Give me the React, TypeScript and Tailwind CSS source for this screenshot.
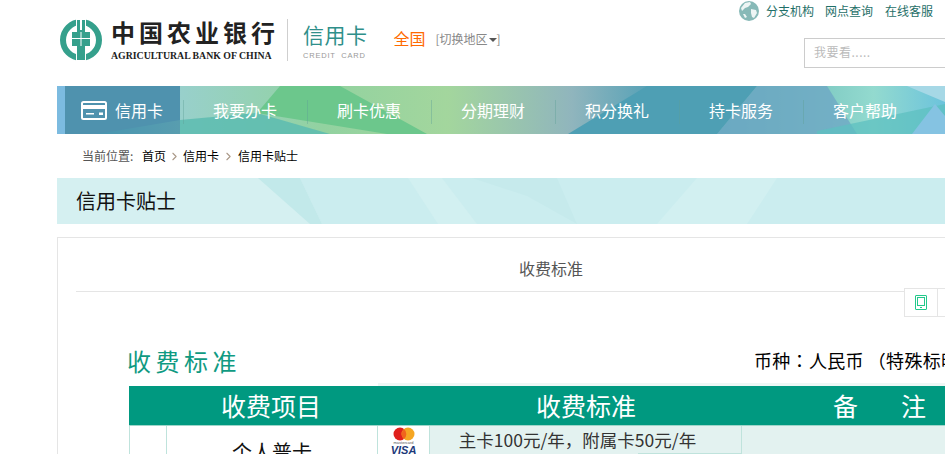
import { ChevronRight } from "lucide-react";

const cjk = "font-['Microsoft_YaHei','Noto_Sans_CJK_SC',sans-serif]";

const navItems = ["我要办卡", "刷卡优惠", "分期理财", "积分换礼", "持卡服务", "客户帮助"];

const AbcLogo = () => (
  <svg width="44" height="42" viewBox="0 0 44 42" className="shrink-0">
    <circle cx="22" cy="21" r="18" fill="none" stroke="#35a08c" strokeWidth="6" />
    <rect x="17" y="0" width="10" height="42" fill="#fff" />
    <path d="M18 1h3v10h2V1h3v12h5v14h-5v14h-8V27h-5V13h5z" fill="#35a08c" />
    <path d="M13 19.500h18M22 13v14" stroke="#fff" strokeWidth="1" />
  </svg>
);

const Globe = () => (
  <svg width="20" height="20" viewBox="0 0 20 20">
    <circle cx="10" cy="10" r="10" fill="#87b9b7" />
    <path d="M6 2l5-1 1 2-3 3-3 1-3 3-1-3zM12 8l5 1 1 3-3 5-2-1-1-4zM4 13l2 0 2 3-2 1z" fill="#fff" opacity=".85" />
  </svg>
);

const CardIcon = () => (
  <svg width="26" height="19" viewBox="0 0 26 19" fill="none">
    <rect x="1" y="1" width="24" height="17" rx="1.500" stroke="#fff" strokeWidth="2" />
    <rect x="1" y="4" width="24" height="4" fill="#fff" />
    <rect x="5" y="12" width="8" height="1.500" fill="#fff" />
    <rect x="18" y="11.500" width="4" height="2.500" fill="#fff" />
  </svg>
);

const NavBackground = () => (
  <svg className="absolute inset-0" width="888" height="48" viewBox="0 0 888 48" preserveAspectRatio="none">
    <defs>
      <linearGradient id="navBase" x1="0" x2="1" y1="0" y2="0">
        <stop offset="0" stopColor="#5cb4cf" />
        <stop offset="0.14" stopColor="#98d0cb" />
        <stop offset="0.3" stopColor="#92d2a0" />
        <stop offset="0.44" stopColor="#a3d69d" />
        <stop offset="0.58" stopColor="#90b5bd" />
        <stop offset="0.68" stopColor="#4f9fb6" />
        <stop offset="0.8" stopColor="#6dbcb8" />
        <stop offset="0.92" stopColor="#93dacf" />
        <stop offset="1" stopColor="#6cc3dc" />
      </linearGradient>
    </defs>
    <rect width="888" height="48" fill="url(#navBase)" />
    <polygon points="0,0 8,0 8,48 0,48" fill="#7cbbe0" />
    <polygon points="8,0 123,0 123,34 40,48 8,48" fill="#7fb3c8" />
    <polygon points="123,34 200,27 273,48 123,48" fill="#5cbcb0" opacity=".85" />
    <polygon points="223,0 283,0 370,48 330,48 200,27" fill="#6cc78c" />
    <polygon points="590,0 700,0 660,48 511,48" fill="#4e9fb4" />
    <polygon points="700,0 770,0 800,48 660,48" fill="#6ea8c4" opacity=".8" />
    <polygon points="760,45 888,18 888,48 760,48" fill="#5dc0c0" opacity=".75" />
    <polygon points="855,48 878,18 888,30 888,48" fill="#85c3e2" />
    <polygon points="850,0 888,0 888,16" fill="#a6d8e6" />
  </svg>
);

const BandBackground = () => (
  <svg className="absolute inset-0" width="888" height="46" viewBox="0 0 888 46">
    <rect width="888" height="46" fill="#d5f0f1" />
    <polygon points="243,0 888,0 888,46 265,46" fill="#cbedef" />
    <polygon points="201,0 243,0 265,46 253,46" fill="#c2e9ea" />
    <polygon points="351,0 385,0 420,46 381,46" fill="#d2f0f1" />
    <polygon points="415,0 500,0 520,46 470,18" fill="#c6eaec" />
    <polygon points="640,0 720,0 690,46 600,46" fill="#d2f0f1" />
  </svg>
);

const CardBrands = () => (
  <div className="flex flex-col items-center pt-[1px]">
    <svg width="22" height="14" viewBox="0 0 22 14">
      <circle cx="7" cy="7" r="6.500" fill="#e0201c" />
      <circle cx="15" cy="7" r="6.500" fill="#f5a623" />
      <path d="M11 2a6.500 6.500 0 0 1 0 10a6.500 6.500 0 0 1 0-10z" fill="#f0641e" />
    </svg>
    <span className="font-['Liberation_Sans',sans-serif] text-[4px] leading-[4px] text-[#555]">mastercard</span>
    <span className="font-['Liberation_Sans',sans-serif] text-[11px] leading-[11px] font-bold italic text-[#1d3a7a]">VISA</span>
  </div>
);

export default function App() {
  return (
    <div className={`h-[454px] w-[945px] overflow-hidden bg-white ${cjk}`}>
      <header className="flex h-[86px] pl-[59px]">
        <div className="flex h-full items-start pt-[19px]">
          <AbcLogo />
          <div className="ml-[8px] flex w-[165px] flex-col">
            <span className="-mt-[2px] font-['Noto_Sans_CJK_SC',sans-serif] text-[24px] leading-[30px] font-bold tracking-[4px] whitespace-nowrap text-[#222]">
              中国农业银行
            </span>
            <span className="mt-[3px] font-['Liberation_Serif',serif] text-[9.800px] leading-[12px] font-bold whitespace-nowrap text-[#222]">
              AGRICULTURAL BANK OF CHINA
            </span>
          </div>
          <div className="ml-[11px] h-[42px] w-px bg-[#cfcfcf]" />
          <div className="ml-[15px] flex flex-col">
            <span className="text-[21px] leading-[30px] tracking-[0.500px] whitespace-nowrap text-[#2f8f8a]">信用卡</span>
            <span className="mt-[2px] font-['Liberation_Sans',sans-serif] text-[7.500px] leading-[10px] tracking-[0.800px] whitespace-pre text-[#999]">
              CREDIT  CARD
            </span>
          </div>
          <span className="mt-[9px] ml-[26px] text-[16px] leading-[20px] whitespace-nowrap text-[#ff6a00]">全国</span>
          <span className="mt-[11px] ml-[10px] flex items-center text-[12px] leading-[18px] whitespace-nowrap text-[#888]">
            [切换地区
            <span className="mt-[2px] ml-[1px] h-0 w-0 border-x-[4px] border-t-[4px] border-x-transparent border-t-[#555]" />
            ]
          </span>
        </div>
        <div className="ml-auto flex w-[206px] shrink-0 flex-col">
          <div className="flex items-center pt-px">
            <Globe />
            <a className="ml-[7px] text-[12px] leading-[20px] whitespace-nowrap text-[#1f6f68]">分支机构</a>
            <a className="ml-[11px] text-[12px] leading-[20px] whitespace-nowrap text-[#1f6f68]">网点查询</a>
            <a className="ml-[12px] text-[12px] leading-[20px] whitespace-nowrap text-[#1f6f68]">在线客服</a>
          </div>
          <div className="mt-[17px] ml-[65px] flex h-[30px] w-[160px] shrink-0 items-center border border-[#ccc] pb-[2px] pl-[9px] text-[12px] tracking-[0.500px] whitespace-nowrap text-[#bbb]">
            我要看.....
          </div>
        </div>
      </header>

      <div className="ml-[57px] w-[888px]">
        <nav className="relative flex h-[48px] overflow-hidden">
          <NavBackground />
          <div className="relative mr-[3px] ml-[8px] flex h-full w-[115px] shrink-0 items-center bg-[#2f7c9c]/60 pl-[16px]">
            <CardIcon />
            <span className="ml-[8px] pb-px text-[16px] whitespace-nowrap text-white">信用卡</span>
          </div>
          {navItems.map((item) => (
            <div key={item} className="relative flex h-full w-[124px] shrink-0 items-center justify-center">
              <span className="absolute top-[14px] left-0 h-[24px] w-px bg-[#5f9f96]/40" />
              <span className="pb-px text-[16px] whitespace-nowrap text-white">{item}</span>
            </div>
          ))}
        </nav>

        <div className="flex h-[44px] items-center pl-[25px] text-[12px] whitespace-nowrap text-black">
          <span className="w-[60px] text-[#555]">当前位置:</span>
          <span>首页</span>
          <ChevronRight size={13} className="mx-[2px] text-[#a98]" />
          <span>信用卡</span>
          <ChevronRight size={13} className="mr-[3px] ml-[3px] text-[#a98]" />
          <span>信用卡贴士</span>
        </div>

        <div className="relative flex h-[46px] items-center pl-[19px]">
          <BandBackground />
          <h1 className="relative text-[20px] font-normal text-[#111]">信用卡贴士</h1>
        </div>

        <section className="relative mt-[13px] h-[300px] w-[1000px] border border-[#e5e5e5] bg-white">
          <div className="mx-[18px] flex h-[54px] w-[950px] items-center border-b border-[#e5e5e5] pt-[6px]">
            <h2 className="w-full text-center text-[16px] font-normal whitespace-nowrap text-[#555]">收费标准</h2>
          </div>

          <div className="absolute top-[50px] left-[846px] flex h-[29px] w-[60px] border border-[#e5e5e5] bg-white">
            <div className="flex w-[33px] items-center justify-center border-r border-[#e5e5e5]">
              <svg width="12" height="15" viewBox="0 0 12 15" fill="none">
                <rect x="0.500" y="0.500" width="11" height="14" rx="0.500" stroke="#22c98c" />
                <rect x="2.500" y="2.500" width="7" height="8" stroke="#22c98c" />
                <rect x="5" y="12" width="2" height="1" fill="#22c98c" />
              </svg>
            </div>
          </div>

          <div className="mt-[51px] flex items-end pl-[69px]">
            <span className="text-[24px] leading-[36px] tracking-[4.500px] whitespace-nowrap text-[#0f9a82]">收费标准</span>
            <span className="ml-[513px] pb-[6px] font-['Noto_Sans_CJK_JP',sans-serif] text-[18px] leading-[26px] tracking-[0.300px] whitespace-nowrap text-black">
              币种：人民币<span className="ml-[4px]">（特殊标明除外）</span>
            </span>
          </div>

          <div className="mt-[7px] ml-[71px] w-[835px]">
            <div className="ml-[249px] h-[3px] -translate-y-[3px] bg-[#eef7f5]" />
            <div className="-mt-[3px] grid h-[39px] grid-cols-[36px_212px_418px_169px] items-center bg-[#009980] text-[25px] whitespace-nowrap text-white">
              <span />
              <span className="text-center">收费项目</span>
              <span className="text-center">收费标准</span>
              <div className="flex justify-center gap-[43px]">
                <span>备</span>
                <span>注</span>
              </div>
            </div>
            <div className="grid grid-cols-[38px_211px_52px_312px_222px] border-t border-[#9fd6ca]">
              <div className="h-[40px] border-x border-[#bfe3dc]" />
              <div className="flex h-[40px] justify-center border-r border-[#bfe3dc] pt-[12px] text-[20px] leading-[28px] text-[#111]">
                个人普卡
              </div>
              <div className="h-[40px] border-r border-[#bfe3dc]">
                <CardBrands />
              </div>
              <div className="h-[40px] border-r border-[#bfe3dc] bg-[#e3f2f0]">
                <div className="h-[27px] pr-[16px] text-center text-[17.500px] leading-[28px] whitespace-nowrap text-[#333]">
                  主卡100元/年，附属卡50元/年
                </div>
                <div className="ml-[208px] border-t border-[#bfe3dc]" />
              </div>
              <div className="h-[40px] bg-[#e3f2f0]" />
            </div>
          </div>
        </section>
      </div>
    </div>
  );
}
